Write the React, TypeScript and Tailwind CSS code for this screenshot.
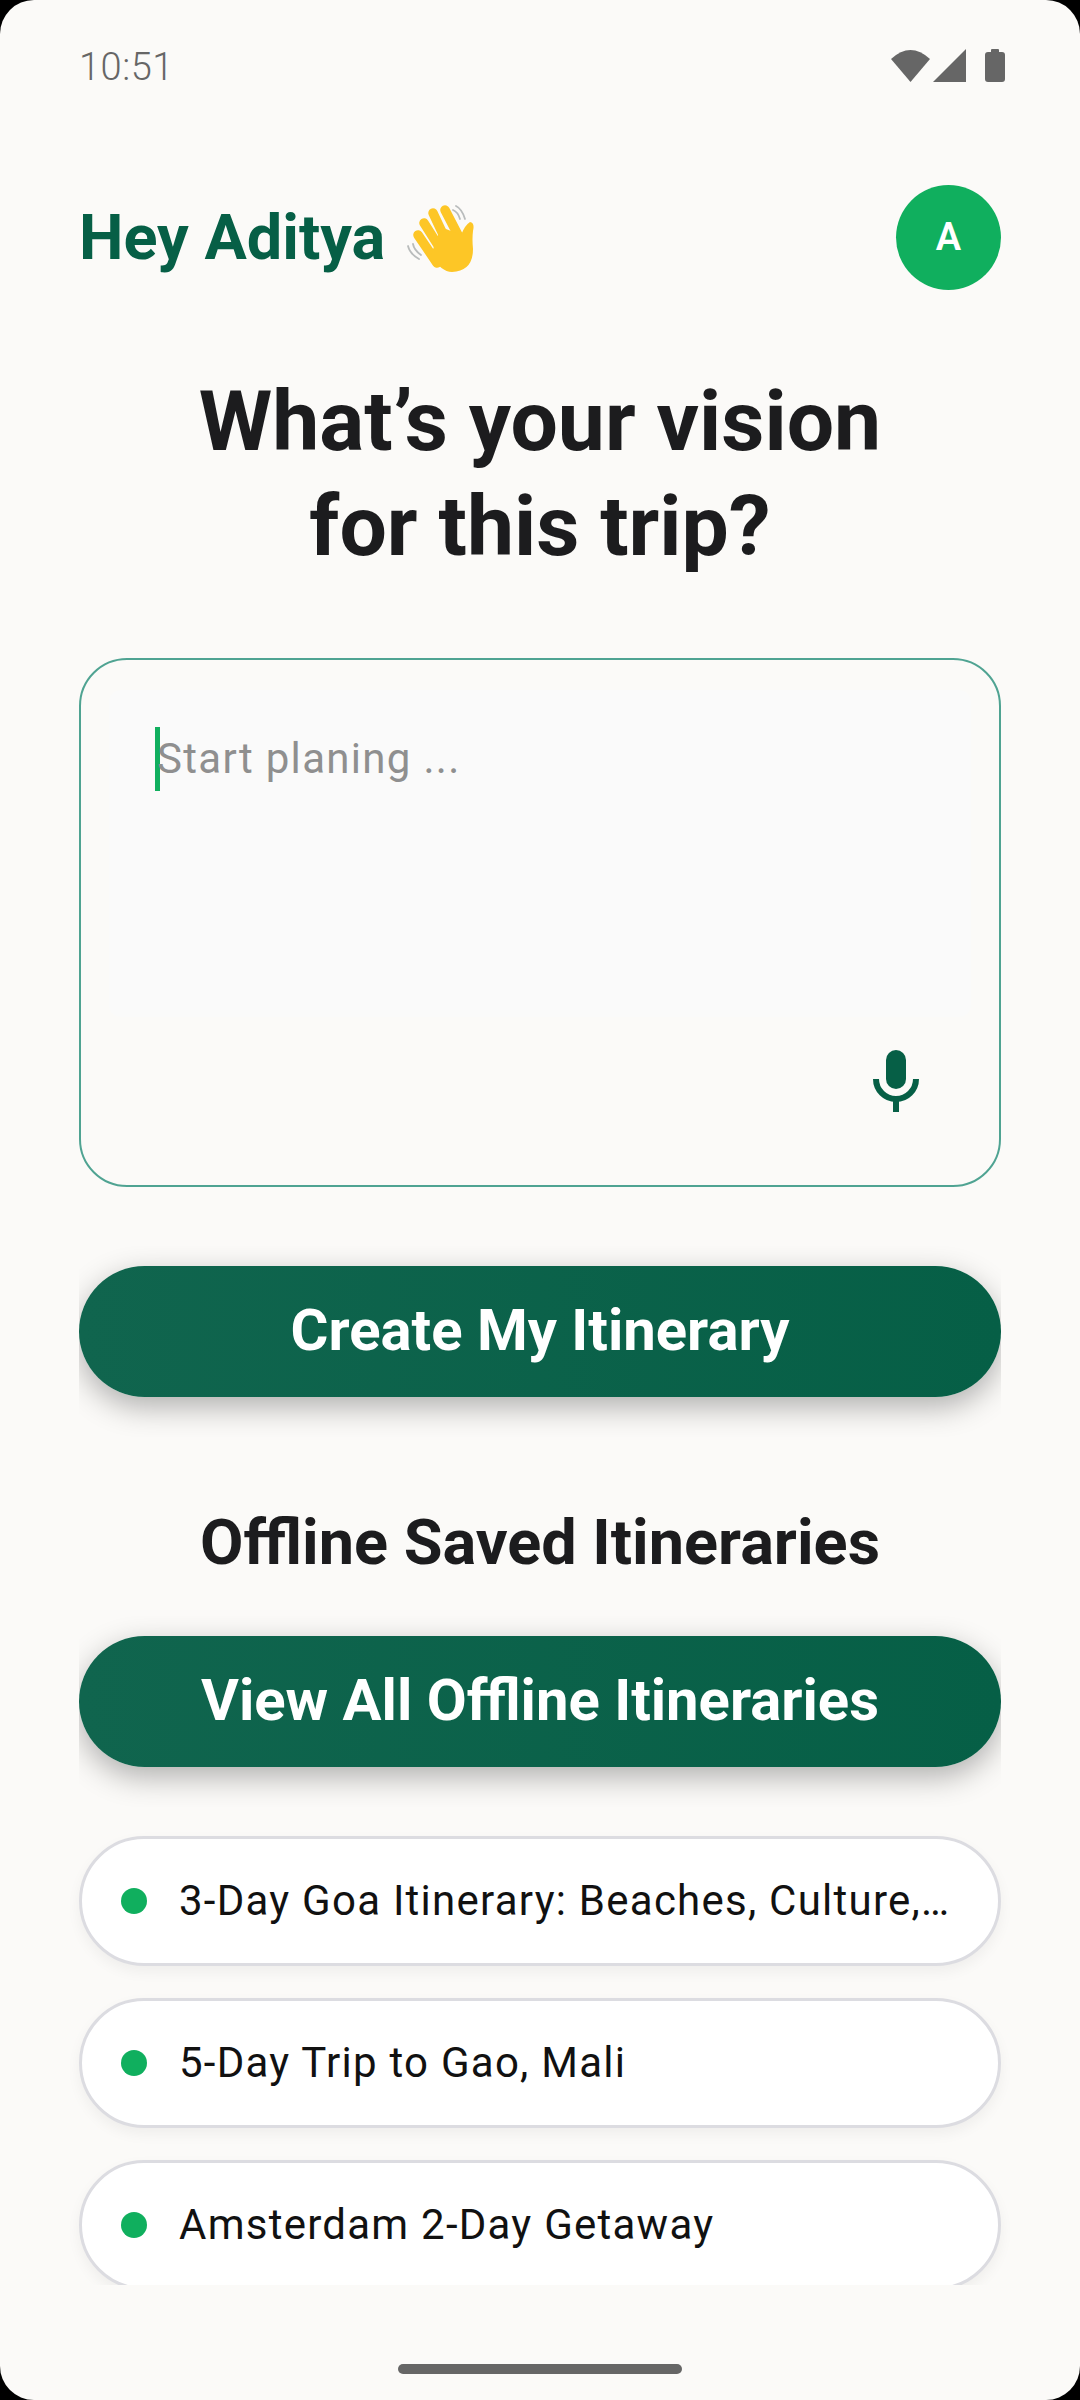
import React from "react";

function StatusIcons() {
  return (
    <svg width="114" height="33" viewBox="0 0 114 33" className="block">
      <path d="M0 10 Q19.500 -8 39 10 L19.500 33 Z" fill="#666666" />
      <path d="M42 33 L75 0 L75 33 Z" fill="#666666" />
      <rect x="94" y="3" width="20" height="30" rx="3" fill="#666666" />
      <rect x="100" y="0" width="8" height="5" rx="1" fill="#666666" />
    </svg>
  );
}

function WaveHand() {
  return (
    <svg width="72" height="70" viewBox="24 24 72 70" className="block ml-[20px] mt-[4px]">
      <g fill="none" stroke="#b9bcbc" strokeWidth="1.800" strokeLinecap="round">
        <path d="M75 25 Q81 28 84 38" />
        <path d="M72 29 Q77 31 79 38" />
        <path d="M27 65 Q29 73 38 78" />
        <path d="M32 63 Q33 69 40 74" />
      </g>
      <g fill="none" stroke="#fdc626" strokeWidth="9.500" strokeLinecap="round">
        <path d="M37 54 L56 82" />
        <path d="M43 42 L62 72" />
        <path d="M52 32 L68 66" />
        <path d="M64 29 L78 56" />
      </g>
      <path
        d="M50 74 L60 46 L80 54 Q84 44 89 41 Q94 42 92 50 Q91 58 92 68 Q92 90 71 91 Q60 91 50 74 Z"
        fill="#fdc626"
      />
    </svg>
  );
}

function Mic() {
  return (
    <svg width="46" height="62" viewBox="0 0 46 62" className="block">
      <rect x="13" y="0" width="20" height="39" rx="10" fill="#065f46" />
      <path d="M3 29 a20 20 0 0 0 40 0" fill="none" stroke="#065f46" strokeWidth="6" />
      <rect x="20" y="49" width="6" height="13" fill="#065f46" />
    </svg>
  );
}

function GreenButton({ label }: { label: string }) {
  return (
    <div className="overflow-hidden pt-[20px] pb-[40px]">
      <div className="flex h-[131px] items-center justify-center rounded-full bg-gradient-to-r from-[#10654e] to-[#065f46] pb-[3px] text-[58px] font-bold text-white shadow-[0_10px_30px_rgba(0,0,0,0.3)]">
        {label}
      </div>
    </div>
  );
}

function Item({ label }: { label: string }) {
  return (
    <div className="flex h-[130px] shrink-0 items-center rounded-full border-[3px] border-[#dcdce1] bg-white pl-[38px] pr-[40px] shadow-[0_6px_14px_rgba(0,0,0,0.05)]">
      <div className="ml-[1px] h-[26px] w-[26px] shrink-0 rounded-full bg-[#10af5e]" />
      <div className="ml-[32px] min-w-0 whitespace-nowrap pb-[2px] text-[42px] tracking-[1.250px] text-[#111111]">{label}</div>
    </div>
  );
}

export default function App() {
  return (
    <div className="h-[2400px] w-[1080px] overflow-hidden bg-black font-['Roboto',sans-serif]">
      <div className="flex h-full flex-col overflow-hidden rounded-[34px] bg-[#fbfaf8]">
        <div className="h-[2285px] shrink-0 overflow-hidden">
          <div className="flex h-[130px] items-center justify-between pl-[79px] pr-[75px]">
            <span className="pt-[4px] text-[38px] font-light tracking-[0.500px] text-[#666666]">10:51</span>
            <StatusIcons />
          </div>
          <div className="flex flex-col pl-[79px] pr-[79px]">
            <div className="mt-[55px] flex h-[105px] items-center justify-between">
              <div className="flex items-center">
                <span className="text-[63px] font-bold leading-none text-[#065f46]">Hey Aditya</span>
                <WaveHand />
              </div>
              <div className="flex h-[105px] w-[105px] items-center justify-center rounded-full bg-[#10af5e] text-[38px] font-semibold text-white">
                A
              </div>
            </div>

            <h1 className="mt-[79px] text-center text-[84px] font-bold leading-[105px] text-[#1c1c1e]">
              What’s your vision
              <br />
              for this trip?
            </h1>

            <div className="mt-[79px] flex h-[529px] flex-col rounded-[48px] border-[2px] border-[#4fa392] pl-[28px] pr-[28px] pt-[30px]">
              <div className="flex h-[327px] items-start rounded-[12px] bg-[#fafafa] pl-[46px] pt-[37px]">
                <div className="h-[64px] w-[5px] bg-[#10af5e]" />
                <span className="-ml-[3px] mt-[2px] text-[42px] leading-[60px] tracking-[1.300px] text-[#8f8f8f]">Start planing ...</span>
              </div>
              <div className="mt-[33px] flex justify-end pr-[52px]">
                <Mic />
              </div>
            </div>

            <div className="mt-[59px]">
              <GreenButton label="Create My Itinerary" />
            </div>

            <h2 className="mt-[71px] h-[70px] text-center text-[63px] font-bold leading-[70px] text-[#1c1c1e]">
              Offline Saved Itineraries
            </h2>

            <div className="mt-[38px]">
              <GreenButton label="View All Offline Itineraries" />
            </div>

            <div className="mt-[29px] flex flex-col gap-[32px]">
              <Item label="3-Day Goa Itinerary: Beaches, Culture,…" />
              <Item label="5-Day Trip to Gao, Mali" />
              <Item label="Amsterdam 2-Day Getaway" />
            </div>
          </div>
        </div>
        <div className="mt-[79px] flex justify-center">
          <div className="h-[10px] w-[284px] rounded-full bg-[#666666]" />
        </div>
      </div>
    </div>
  );
}
